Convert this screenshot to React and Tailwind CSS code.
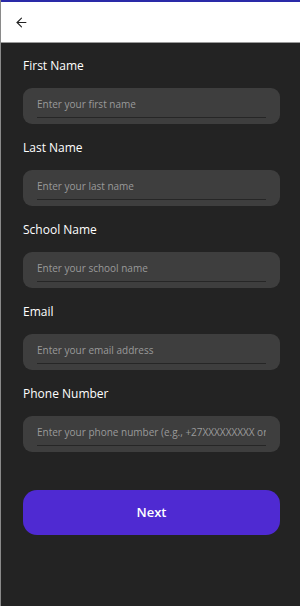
import { ArrowLeft } from 'lucide-react';

const fields = [
  { label: 'First Name', placeholder: 'Enter your first name' },
  { label: 'Last Name', placeholder: 'Enter your last name' },
  { label: 'School Name', placeholder: 'Enter your school name' },
  { label: 'Email', placeholder: 'Enter your email address' },
  { label: 'Phone Number', placeholder: 'Enter your phone number (e.g., +27XXXXXXXXX or 0XXXXXXXXX)' },
];

export default function App() {
  return (
    <div
      className="w-[300px] h-[606px] flex flex-col bg-[#232323] border-l border-[#8a8a8a] overflow-hidden"
      style={{ fontFamily: '"Open Sans", "Noto Sans", sans-serif' }}
    >
      {/* Шапка */}
      <div className="h-[43px] shrink-0 bg-white border-t-[2px] border-[#2a2aa8] border-b border-b-[#9a9a9a] flex items-center pl-[13px]">
        <ArrowLeft className="w-[15px] h-[15px] text-[#222]" strokeWidth={1.75} />
      </div>

      {/* Форма */}
      <div className="flex flex-col pl-[22px] pr-[20px] pt-[15px]">
        {fields.map((f) => (
          <div key={f.label} className="flex flex-col">
            <label className="text-[12px] leading-[16px] text-white">{f.label}</label>
            <div className="mt-[14px] mb-[16px] h-[36px] rounded-[9px] bg-[#3e3e3e] px-[14px] pt-[9px]">
              <div className="border-b border-[#262626] pb-[6px] overflow-hidden whitespace-nowrap text-[10px] leading-[14px] text-[#9a9a9a]">
                {f.placeholder}
              </div>
            </div>
          </div>
        ))}

        <button className="mt-[22px] h-[45px] rounded-[14px] bg-[#4f2ad2] text-white text-[13px] font-semibold">
          Next
        </button>
      </div>
    </div>
  );
}
